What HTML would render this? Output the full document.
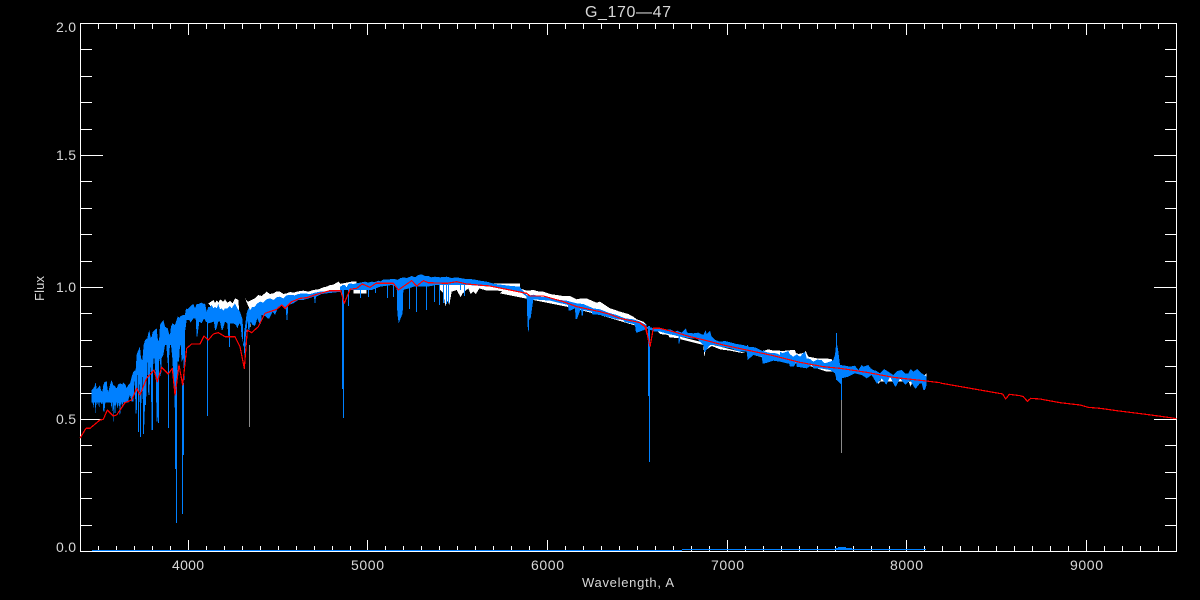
<!DOCTYPE html>
<html>
<head>
<meta charset="utf-8">
<title>G_170-47</title>
<style>
html,body{margin:0;padding:0;background:#000;width:1200px;height:600px;overflow:hidden}
svg{display:block}
text{font-family:"Liberation Sans",sans-serif;fill:#d8d8d8;font-weight:400}
.n *{vector-effect:non-scaling-stroke}
</style>
</head>
<body>
<svg width="1200" height="600" viewBox="0 0 1200 600" xmlns="http://www.w3.org/2000/svg">
<rect width="1200" height="600" fill="#000"/>

<!-- frame and ticks -->
<g stroke="#fff" stroke-width="1" fill="none" shape-rendering="crispEdges">
<rect x="80.5" y="23.5" width="1096" height="528"/>
<path d="M98.5 551V546M116.5 551V546M134.5 551V546M152.5 551V546M170.5 551V546M188.5 551V540M206.5 551V546M224.5 551V546M242.5 551V546M260.5 551V546M278.5 551V546M296.5 551V546M314.5 551V546M332.5 551V546M350.5 551V546M367.5 551V540M385.5 551V546M403.5 551V546M421.5 551V546M439.5 551V546M457.5 551V546M475.5 551V546M493.5 551V546M511.5 551V546M529.5 551V546M547.5 551V540M565.5 551V546M583.5 551V546M601.5 551V546M619.5 551V546M637.5 551V546M655.5 551V546M673.5 551V546M691.5 551V546M709.5 551V546M727.5 551V540M745.5 551V546M763.5 551V546M781.5 551V546M799.5 551V546M817.5 551V546M835.5 551V546M853.5 551V546M871.5 551V546M889.5 551V546M906.5 551V540M924.5 551V546M942.5 551V546M960.5 551V546M978.5 551V546M996.5 551V546M1014.5 551V546M1032.5 551V546M1050.5 551V546M1068.5 551V546M1086.5 551V540M1104.5 551V546M1122.5 551V546M1140.5 551V546M1158.5 551V546"/>
<path d="M98.5 24V29M116.5 24V29M134.5 24V29M152.5 24V29M170.5 24V29M188.5 24V35M206.5 24V29M224.5 24V29M242.5 24V29M260.5 24V29M278.5 24V29M296.5 24V29M314.5 24V29M332.5 24V29M350.5 24V29M367.5 24V35M385.5 24V29M403.5 24V29M421.5 24V29M439.5 24V29M457.5 24V29M475.5 24V29M493.5 24V29M511.5 24V29M529.5 24V29M547.5 24V35M565.5 24V29M583.5 24V29M601.5 24V29M619.5 24V29M637.5 24V29M655.5 24V29M673.5 24V29M691.5 24V29M709.5 24V29M727.5 24V35M745.5 24V29M763.5 24V29M781.5 24V29M799.5 24V29M817.5 24V29M835.5 24V29M853.5 24V29M871.5 24V29M889.5 24V29M906.5 24V35M924.5 24V29M942.5 24V29M960.5 24V29M978.5 24V29M996.5 24V29M1014.5 24V29M1032.5 24V29M1050.5 24V29M1068.5 24V29M1086.5 24V35M1104.5 24V29M1122.5 24V29M1140.5 24V29M1158.5 24V29"/>
<path d="M81 49.5H92M81 76.5H92M81 102.5H92M81 129.5H92M81 155.5H103M81 181.5H92M81 208.5H92M81 234.5H92M81 261.5H92M81 287.5H103M81 313.5H92M81 340.5H92M81 366.5H92M81 393.5H92M81 419.5H103M81 445.5H92M81 472.5H92M81 498.5H92M81 525.5H92"/>
<path d="M1176 49.5H1165M1176 76.5H1165M1176 102.5H1165M1176 129.5H1165M1176 155.5H1154M1176 181.5H1165M1176 208.5H1165M1176 234.5H1165M1176 261.5H1165M1176 287.5H1154M1176 313.5H1165M1176 340.5H1165M1176 366.5H1165M1176 393.5H1165M1176 419.5H1154M1176 445.5H1165M1176 472.5H1165M1176 498.5H1165M1176 525.5H1165"/>
</g>

<!-- white spectrum -->
<g fill="#fff" shape-rendering="crispEdges">
<g transform="translate(180 280) scale(.33333)">
<polygon points="85,70 92,66 100,60 105,68 110,62 116,68 120,58 130,65 135,58 142,68 150,63 158,70 165,55 175,60 178,100 160,100 100,90"/>
<polygon points="195,55 200,62 205,65 215,60 225,55 235,45 245,48 260,35 270,42 280,40 290,34 300,35 310,42 320,40 330,36 340,38 355,34 370,32 385,35 400,30 415,28 430,22 440,20 450,15 460,14 475,5 482,12 485,30 400,45 300,60 210,90"/>
<polygon points="205,100 212,95 212,140 205,145"/>
</g>
<g transform="translate(300 260) scale(.33333)">
<polygon points="160,75 190,68 200,75 200,100 160,100"/>
</g>
<g transform="translate(340 270) scale(.33333)">
<polygon points="0,42 10,40 20,38 35,35 50,35 50,50 0,55"/>
<polygon points="300,60 310,70 316,110 320,90 328,104 335,65 350,60 362,82 368,70 385,55 392,72 400,65 408,72 418,55 440,62 470,62 540,65 540,40 300,40"/>
</g>
<g transform="translate(300 260) scale(.33333)">
<polygon points="620,80 635,78 650,80 665,87 680,92 700,90 715,94 730,95 750,102 770,105 790,108 810,108 830,118 845,115 860,115 875,122 890,128 900,125 915,135 930,145 945,150 960,155 985,162 1000,170 1010,178 1030,185 1040,195 1040,205 1000,195 900,165 800,140 700,120 600,100"/>
</g>
<g transform="translate(640 310) scale(.33333)">
<polygon points="45,55 60,72 85,75 88,82 120,85 122,88 150,95 190,105 193,140 197,120 215,108 240,118 270,122 300,128 322,130 322,115 345,118 365,125 385,118 400,122 420,122 440,130 460,125 475,132 495,128 510,145 530,148 550,150 580,152 590,160 590,185 560,185 500,165 400,150 300,125 200,100 100,75"/>
</g>
<g transform="translate(780 345) scale(.33333)">
<polygon points="0,18 10,18 25,16 45,15 50,32 70,30 77,18 85,35 110,40 130,40 155,42 160,60 100,60 0,45"/>
<polygon points="290,100 296,118 305,100 330,95 345,125 352,100 385,108 392,125 400,100 415,80 420,100 440,85 440,110 300,110"/>
</g>
</g>

<!-- blue spectrum -->
<g fill="#0080ff" stroke="none" shape-rendering="crispEdges">
<g transform="translate(85 295) scale(.33333)">
<rect x="20" y="290" width="110" height="33"/>
<polygon points="20,285 25,280 28,275 32,262 35,282 38,280 45,270 48,285 52,290 55,270 58,262 65,258 68,285 70,290 75,270 80,255 85,270 88,272 95,280 100,268 105,265 112,268 115,262 122,270 125,280 130,270 135,265 140,245 145,230 152,225 155,180 158,170 165,155 168,190 172,195 176,150 180,135 187,130 190,115 193,105 197,128 200,125 203,112 207,108 215,100 218,130 222,140 225,90 228,85 235,75 240,95 248,100 252,115 255,120 258,95 262,85 270,90 273,80 278,65 285,68 288,90 292,95 295,65 298,60 300,60 300,190 298,260 295,190 290,200 287,150 285,150 282,200 278,200 275,300 272,420 268,300 262,190 258,150 255,150 252,190 248,205 244,150 240,150 235,180 230,190 228,260 225,190 222,200 218,380 215,380 212,240 208,190 205,190 202,405 200,405 197,200 193,300 190,300 187,195 183,330 180,330 177,410 175,410 172,240 168,345 165,345 162,240 158,240 155,355 152,355 149,250 145,320 140,320 135,300 130,315 125,300 120,320 115,310 112,340 108,315 105,370 102,320 98,340 93,320 90,365 87,320 85,385 82,320 80,340 75,310 70,300 65,300 62,315 58,350 55,350 52,310 50,330 45,310 42,345 40,310 38,330 35,310 32,358 29,310 25,340 22,315 20,320"/>
</g>
<g transform="translate(180 280) scale(.33333)">
<polygon points="0,110 8,105 15,105 18,85 23,88 30,80 35,75 40,72 45,85 50,72 55,72 60,70 65,68 72,72 75,70 80,95 85,80 90,82 95,75 100,85 105,80 110,85 115,72 120,88 125,85 130,92 135,85 142,85 150,78 155,85 165,70 172,85 180,95 185,110 188,120 190,210 193,150 195,140 200,100 205,85 212,90 215,82 225,80 230,72 240,65 250,68 260,58 270,55 280,60 290,52 300,50 310,55 320,46 330,45 345,46 355,42 370,40 390,42 405,38 420,35 440,35 460,30 485,30 485,35 440,40 425,42 408,50 405,75 402,50 370,60 355,60 340,70 325,75 322,120 320,120 317,85 305,78 295,80 285,105 278,95 268,115 262,115 255,108 245,105 243,130 238,130 232,115 225,138 218,135 212,125 208,150 205,150 203,120 196,180 195,270 192,200 185,170 182,135 178,130 172,145 168,135 160,130 150,130 147,170 145,170 142,130 135,125 128,150 125,150 120,125 115,125 108,150 105,150 102,125 92,128 85,130 78,125 72,115 65,130 58,125 52,170 50,170 47,115 40,115 32,128 28,120 20,120 16,150 10,155 5,145 0,150"/>
</g>
<g transform="translate(340 270) scale(.33333)">
<polygon points="0,50 8,46 15,45 20,52 25,42 30,40 40,42 50,40 60,38 75,35 85,38 95,35 105,36 115,32 122,34 130,28 145,28 165,27 172,30 180,25 190,22 200,24 215,18 225,22 235,15 245,13 255,18 265,18 275,22 285,20 300,22 320,20 335,24 350,22 370,26 400,28 420,32 440,35 465,42 490,45 515,48 540,50 540,65 500,60 450,50 385,45 330,45 290,45 262,50 222,50 190,60 188,130 182,145 176,160 172,130 170,50 155,45 120,50 95,60 75,60 55,60 30,60 0,60"/>
</g>
<g transform="translate(300 260) scale(.33333)">
<polygon points="660,82 680,105 685,107 700,104 720,110 750,113 780,120 800,122 830,130 850,132 880,145 900,148 925,158 950,165 975,175 1000,178 1020,185 1040,195 1040,207 1011,218 1008,218 1005,195 1000,192 978,187 972,185 970,180 950,178 900,165 882,163 877,163 875,155 850,150 849,167 845,167 843,145 831,177 827,177 825,145 810,152 806,152 804,135 750,122 700,118 692,175 688,175 686,215 684,215 682,175 680,110 660,95"/>
</g>
<g transform="translate(640 310) scale(.33333)">
<polygon points="0,38 20,50 45,55 60,57 75,60 90,58 105,65 112,62 125,68 138,55 141,68 160,70 175,68 190,75 197,60 200,72 210,62 214,78 225,90 240,95 255,93 275,98 290,102 310,105 325,110 345,112 365,122 385,128 410,130 420,135 420,155 400,152 375,160 368,160 365,140 340,135 323,150 320,125 300,125 270,115 240,110 225,105 210,105 195,125 190,105 170,85 150,85 120,80 119,100 115,100 115,78 85,72 60,65 45,65 20,55 0,50"/>
</g>
<g transform="translate(780 345) scale(.33333)">
<polygon points="0,20 8,24 15,22 25,18 30,28 40,35 50,28 60,35 68,26 75,20 80,40 90,42 100,50 112,44 125,45 130,52 135,55 150,50 160,45 165,30 168,0 172,2 175,20 180,60 195,62 210,65 225,62 235,75 245,60 250,65 265,60 272,70 280,75 290,78 300,85 312,72 325,80 340,90 352,78 365,75 375,85 385,85 392,72 400,80 412,72 425,85 440,95 440,120 435,135 430,135 425,115 420,115 408,130 405,130 390,105 378,118 375,118 360,100 348,125 345,125 330,95 320,118 318,118 305,100 292,115 290,115 275,90 260,100 245,90 225,85 205,95 185,100 183,118 175,110 170,105 165,85 150,75 120,70 100,70 95,60 80,70 50,65 48,50 42,65 30,65 27,55 20,55 0,50"/>
</g>
<rect x="175" y="366" width="2" height="103"/>
<rect x="182" y="383" width="2" height="72"/>
<rect x="342" y="285" width="2" height="104"/>
<rect x="648" y="326" width="2" height="70"/>
</g>

<g fill="none" stroke="#0080ff" stroke-width="1" shape-rendering="crispEdges">
<path d="M176.5 400V523M182.5 400V514M207.5 320V416M229.5 320V347M138.5 370V432M140.5 370V437M143.5 370V434M152.5 365V430M158.5 345V423M168.5 340V428"/>
<path d="M343.5 300V418M649.5 326V462M704.5 340V352M747.5 345V356M763.5 350V362"/>
<path d="M841.5 375V400M836.5 333V380"/>
<path d="M348.5 285V305M348.5 285V306M360.5 285V298M368.5 285V297M375.5 285V293M387.5 285V298M393.5 285V297M409.5 285V309M416.5 285V312M426.5 285V310M434.5 285V302M439.5 285V305M443.5 285V303M446.5 285V304M448.5 285V303M464.5 285V296M460.5 285V290"/>
<path d="M92 550.5H682M682 549.5H926M835 548.5H852M838 547.5H846"/>
</g>
<g fill="none" stroke="#8a8a8a" stroke-width="1" shape-rendering="crispEdges">
<path d="M249.5 345V427M841.5 400V453"/>
</g>

<!-- red model -->
<g class="n" fill="none" stroke="#ff0000" stroke-width="1.2" stroke-linejoin="round" shape-rendering="crispEdges">
<g transform="translate(0 250) scale(.33333)">
<polyline points="240,565 258,535 270,535 300,510 310,508 322,480 340,498 350,495 375,458 395,450 410,415 420,435 440,385 462,360 472,395 485,352 505,372 517,355 525,435 530,400 537,345 548,405 560,295 575,282 600,282 612,258 625,270 640,252 655,248 675,260 705,260 720,290 733,355 742,240 755,248 775,230 795,190 830,178 845,165 855,175 875,155 900,145"/>
</g>
<g transform="translate(300 260) scale(.33333)">
<polyline points="0,115 20,113 50,103 90,92 122,92 133,130 150,88 170,85 187,72 210,82 228,70 280,70 295,90 335,62 350,78 370,62 385,68 440,70 470,65 500,72 570,78 620,88 680,100 690,108 730,108 790,125 830,140 900,155 930,163 960,175 1020,188 1038,200 1045,240"/>
</g>
<g transform="translate(640 310) scale(.33333)">
<polyline points="0,40 15,50 22,75 30,110 40,55 60,55 100,65 150,80 200,92 250,105 320,120 400,137 480,157 550,170 600,175 680,187 760,202 850,212 900,218"/>
</g>
<polyline points="940,383 1000,393.5"/>
<g transform="translate(1000 380) scale(.33333)">
<polyline points="0,40 8,42 17,57 28,43 60,47 70,50 82,64 92,55 120,57 180,68 240,75 265,82 300,85 350,92 430,102 490,110 530,116"/>
</g>
</g>

<!-- labels -->
<text x="585" y="17" font-size="16" textLength="86" lengthAdjust="spacing">G_170—47</text>
<text x="56" y="32" font-size="14" textLength="20" lengthAdjust="spacing">2.0</text>
<text x="56" y="160" font-size="14" textLength="20" lengthAdjust="spacing">1.5</text>
<text x="56" y="292" font-size="14" textLength="20" lengthAdjust="spacing">1.0</text>
<text x="56" y="424" font-size="14" textLength="20" lengthAdjust="spacing">0.5</text>
<text x="56" y="552" font-size="14" textLength="20" lengthAdjust="spacing">0.0</text>
<text x="172" y="570" font-size="14" textLength="32" lengthAdjust="spacing">4000</text>
<text x="351" y="570" font-size="14" textLength="33" lengthAdjust="spacing">5000</text>
<text x="531" y="570" font-size="14" textLength="33" lengthAdjust="spacing">6000</text>
<text x="711" y="570" font-size="14" textLength="33" lengthAdjust="spacing">7000</text>
<text x="890" y="570" font-size="14" textLength="33" lengthAdjust="spacing">8000</text>
<text x="1070" y="570" font-size="14" textLength="33" lengthAdjust="spacing">9000</text>
<text x="582" y="587" font-size="13" textLength="92" lengthAdjust="spacing">Wavelength, A</text>
<text transform="translate(44 301) rotate(-90)" font-size="13" textLength="25" lengthAdjust="spacing">Flux</text>
</svg>
</body>
</html>
